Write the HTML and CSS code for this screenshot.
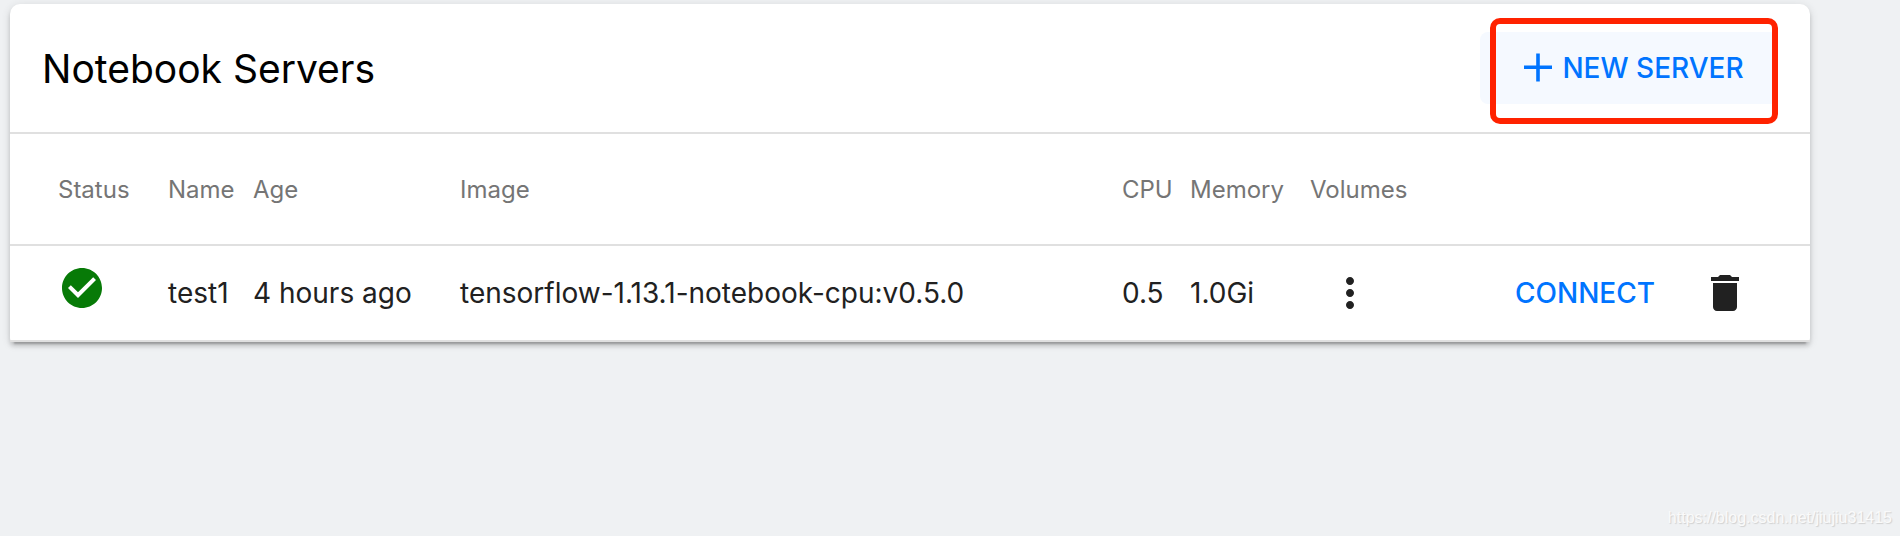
FILE: index.html
```html
<!DOCTYPE html>
<html lang="en">

<head>
    <meta charset="UTF-8">
    <meta name="viewport" content="width=device-width, initial-scale=1.0">
    <title>Notebook Servers</title>
    <link rel="stylesheet" href="styles.css">
</head>

<body>
    <main class="card">
        <header class="card-header">
            <h1>Notebook Servers</h1>
            <div class="new-server">
                <button type="button" class="new-button">
                    <svg class="icon" viewBox="0 0 24 24" aria-hidden="true">
                        <path d="M19 12.5h-6.1v6.2h-1.8v-6.2H5v-1.8h6.1V4.7h1.8v6h6.1z" />
                    </svg>
                    <span>NEW SERVER</span>
                </button>
                <div class="highlight"></div>
            </div>
        </header>
        <table>
            <colgroup>
                <col class="col-status">
                <col class="col-name">
                <col class="col-age">
                <col class="col-image">
                <col class="col-cpu">
                <col class="col-memory">
                <col class="col-volumes">
                <col class="col-connect">
                <col class="col-delete">
            </colgroup>
            <thead>
                <tr>
                    <th>Status</th>
                    <th>Name</th>
                    <th>Age</th>
                    <th>Image</th>
                    <th>CPU</th>
                    <th>Memory</th>
                    <th>Volumes</th>
                    <th></th>
                    <th></th>
                </tr>
            </thead>
            <tbody>
                <tr>
                    <td>
                        <svg class="icon ready" viewBox="0 0 24 24" role="img" aria-label="Running">
                            <path d="M12 2C6.48 2 2 6.48 2 12s4.48 10 10 10 10-4.48 10-10S17.52 2 12 2zm-2 15l-5-5 1.41-1.41L10 14.17l7.59-7.59L19 8l-9 9z" />
                        </svg>
                    </td>
                    <td>test1</td>
                    <td>4 hours ago</td>
                    <td>tensorflow-1.13.1-notebook-cpu:v0.5.0</td>
                    <td>0.5</td>
                    <td>1.0Gi</td>
                    <td>
                        <button type="button" class="icon-button" aria-label="Show volumes">
                            <svg class="icon" viewBox="0 0 24 24" aria-hidden="true">
                                <path d="M12 8c1.1 0 2-.9 2-2s-.9-2-2-2-2 .9-2 2 .9 2 2 2zm0 2c-1.1 0-2 .9-2 2s.9 2 2 2 2-.9 2-2-.9-2-2-2zm0 6c-1.1 0-2 .9-2 2s.9 2 2 2 2-.9 2-2-.9-2-2-2z" />
                            </svg>
                        </button>
                    </td>
                    <td><button type="button" class="connect-button">CONNECT</button></td>
                    <td>
                        <button type="button" class="icon-button" aria-label="Delete server">
                            <svg class="icon" viewBox="0 0 24 24" aria-hidden="true">
                                <path d="M6 19c0 1.1.9 2 2 2h8c1.1 0 2-.9 2-2V7H6v12zM19 4h-3.5l-1-1h-5l-1 1H5v2h14V4z" />
                            </svg>
                        </button>
                    </td>
                </tr>
            </tbody>
        </table>
    </main>
    <footer class="watermark">https://blog.csdn.net/jiujiu31415</footer>
</body>

</html>
```

FILE: styles.css
```css
* {
    box-sizing: border-box;
}

body {
    display: flex;
    flex-direction: column;
    min-height: 100vh;
    margin: 0;
    padding: 4px 0 0;
    font-family: Inter, "Liberation Sans", sans-serif;
    font-size: 28px;
    color: #212121;
    background-color: #eff1f3;
}

.card {
    margin: 0 90px 0 10px;
    background-color: #fff;
    border-radius: 10px 10px 4px 4px;
    box-shadow: 0 6px 2px -4px rgba(0, 0, 0, 0.2),
        0 4px 4px 0 rgba(0, 0, 0, 0.14),
        0 2px 10px 0 rgba(0, 0, 0, 0.12);
}

.card-header {
    display: flex;
    align-items: center;
    justify-content: space-between;
    padding: 28px 32px;
    border-bottom: 2px solid #e0e0e0;
}

h1 {
    margin: 0;
    font-size: 39px;
    font-weight: 400;
    color: #000;
}

button {
    padding: 0;
    border: none;
    background: none;
    font: inherit;
    color: inherit;
    cursor: pointer;
}

.icon {
    display: block;
    width: 48px;
    height: 48px;
    fill: currentColor;
}

.new-server {
    position: relative;
}

.new-button {
    display: flex;
    align-items: center;
    justify-content: center;
    min-width: 298px;
    height: 72px;
    border-radius: 8px;
    font-weight: 500;
    color: #0074ff;
    background-color: #f5f9ff;
}

/* red frame around the new server button */
.highlight {
    position: absolute;
    inset: -14px 0 -20px 10px;
    border: 6px solid #ff2200;
    border-radius: 10px;
    pointer-events: none;
}

table {
    width: 100%;
    table-layout: fixed;
    border-collapse: separate;
    border-spacing: 0;
}

th,
td {
    padding: 0;
    border-bottom: 2px solid #e0e0e0;
    text-align: left;
    white-space: nowrap;
}

th {
    height: 112px;
    font-size: 24px;
    font-weight: 400;
    color: #757575;
}

td {
    height: 96px;
}

th:first-child,
td:first-child {
    padding-left: 48px;
}

.col-status {
    width: 158px;
}

.col-name {
    width: 85px;
}

.col-age {
    width: 207px;
}

.col-cpu {
    width: 68px;
}

.col-memory {
    width: 120px;
}

.col-volumes {
    width: 205px;
}

.col-connect {
    width: 170px;
}

.col-delete {
    width: 125px;
}

.ready {
    margin-bottom: 10px;
    color: #077a07;
}

.icon-button {
    display: block;
    padding: 16px;
}

.connect-button {
    font-weight: 500;
    color: #0074ff;
}

.watermark {
    margin-top: auto;
    padding: 0 8px 8px;
    font-family: "Liberation Sans", sans-serif;
    font-size: 16px;
    line-height: 20px;
    text-align: right;
    color: #fafafa;
    text-shadow: 1px 1px 1px #d0d0d0;
}
```
